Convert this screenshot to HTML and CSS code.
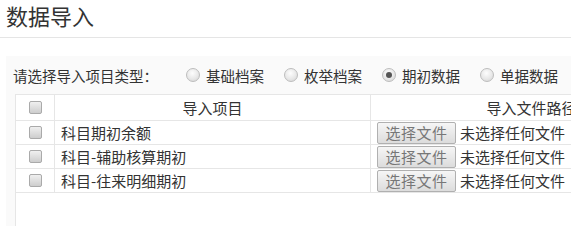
FILE: index.html
```html
<!DOCTYPE html>
<html lang="zh-CN">
<head>
<meta charset="utf-8">
<title>数据导入</title>
<link rel="stylesheet" href="styles.css">
</head>
<body>
<div class="page">
  <h1 class="title">数据导入</h1>
  <div class="panel">
    <div class="type-row">
      <span class="type-label">请选择导入项目类型：</span>
      <label class="radio-item"><span class="radio"></span><span>基础档案</span></label>
      <label class="radio-item"><span class="radio"></span><span>枚举档案</span></label>
      <label class="radio-item"><span class="radio checked"></span><span>期初数据</span></label>
      <label class="radio-item"><span class="radio"></span><span>单据数据</span></label>
    </div>
    <div class="table-wrap">
      <table class="grid">
        <colgroup>
          <col class="c-check">
          <col class="c-name">
          <col class="c-path">
        </colgroup>
        <thead>
          <tr>
            <th class="cell-check"><span class="checkbox"></span></th>
            <th>导入项目</th>
            <th>导入文件路径</th>
          </tr>
        </thead>
        <tbody>
          <tr>
            <td class="cell-check"><span class="checkbox"></span></td>
            <td class="cell-name">科目期初余额</td>
            <td class="cell-file"><span class="file-btn">选择文件</span><span class="file-none">未选择任何文件</span></td>
          </tr>
          <tr>
            <td class="cell-check"><span class="checkbox"></span></td>
            <td class="cell-name">科目-辅助核算期初</td>
            <td class="cell-file"><span class="file-btn">选择文件</span><span class="file-none">未选择任何文件</span></td>
          </tr>
          <tr>
            <td class="cell-check"><span class="checkbox"></span></td>
            <td class="cell-name">科目-往来明细期初</td>
            <td class="cell-file"><span class="file-btn">选择文件</span><span class="file-none">未选择任何文件</span></td>
          </tr>
        </tbody>
      </table>
    </div>
  </div>
</div>
</body>
</html>
```

FILE: styles.css
```css
html, body {
  margin: 0;
  padding: 0;
  background: #fff;
  overflow: hidden;
  height: 226px;
}
body {
  font-family: "Noto Sans CJK SC", "Liberation Sans", sans-serif;
  color: #333;
  font-size: 15px;
}
.page {
  width: 571px;
  height: 226px;
  overflow: hidden;
}
.title {
  margin: 0;
  padding: 0 0 0 6px;
  height: 37px;
  line-height: 30px;
  font-size: 22px;
  font-weight: normal;
  color: #333;
  border-bottom: 1px solid #e5e5e5;
}
.panel {
  margin: 18px 0 0 6px;
  padding-left: 9px;
  background: #fafafa;
  height: 170px;
  width: 700px;
}
.type-row {
  display: flex;
  align-items: center;
  height: 38px;
  margin-left: -2px;
  font-size: 14.5px;
  white-space: nowrap;
}
.type-label {
  flex-shrink: 0;
  margin-right: 28px;
  color: #333;
}
.radio-item {
  flex-shrink: 0;
  display: flex;
  align-items: center;
  margin-right: 20px;
}
.radio {
  flex-shrink: 0;
  width: 12px;
  height: 12px;
  border: 1px solid #bdbdbd;
  border-radius: 50%;
  background: radial-gradient(circle at 45% 35%, #fdfdfd 0%, #e8e8e8 55%, #d2d2d2 100%);
  margin-right: 6px;
  position: relative;
  box-sizing: content-box;
}
.radio.checked::after {
  content: "";
  position: absolute;
  left: 3px;
  top: 3px;
  width: 6px;
  height: 6px;
  border-radius: 50%;
  background: #555;
}
.table-wrap {
  background: #fff;
  border-left: 1px solid #e6e6e6;
  height: 132px;
  overflow: hidden;
}
.grid {
  border-collapse: collapse;
  table-layout: fixed;
  width: 677px;
  margin-left: -1px;
}
.c-check { width: 39px; }
.c-name { width: 316px; }
.c-path { width: 322px; }
.grid th,
.grid td {
  border: 1px solid #e6e6e6;
  padding: 0;
  font-weight: normal;
  white-space: nowrap;
  color: #333;
  line-height: 20px;
}
.grid th {
  height: 25px;
  text-align: center;
}
.grid td {
  height: 23px;
}
.cell-check {
  text-align: center;
}
.cell-name {
  padding-left: 6px !important;
}
.cell-file {
  padding-left: 6px !important;
}
.checkbox {
  display: inline-block;
  width: 11px;
  height: 11px;
  border: 1px solid #aaa;
  border-radius: 2px;
  background: linear-gradient(#f0f0f0, #cdcdcd);
  vertical-align: middle;
  position: relative;
  top: -2px;
}
.file-btn {
  display: inline-block;
  box-sizing: border-box;
  width: 79px;
  height: 22px;
  line-height: 20px;
  border: 1px solid #b0b0b0;
  border-radius: 2px;
  background: linear-gradient(#f6f6f6, #dcdcdc);
  color: #777;
  text-align: center;
  vertical-align: middle;
  margin-right: 4px;
  letter-spacing: 0.5px;
}
.file-none {
  vertical-align: middle;
  color: #333;
}
```
